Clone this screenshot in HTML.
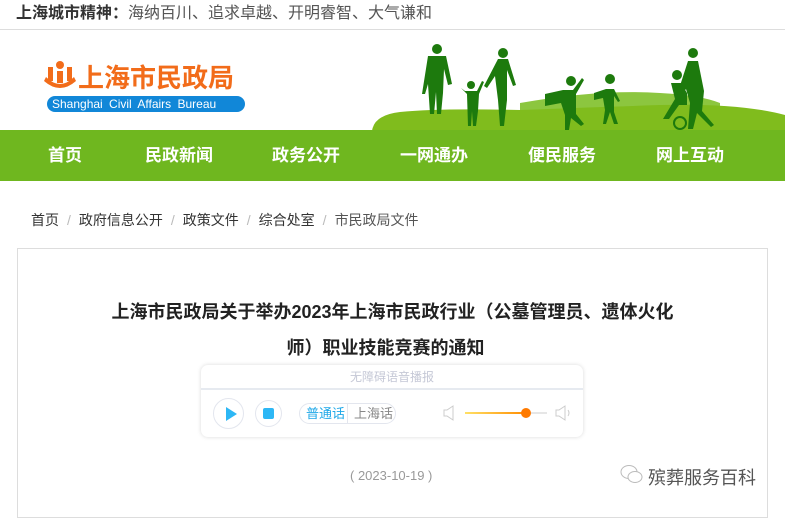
<!DOCTYPE html>
<html><head><meta charset="utf-8"><style>
*{margin:0;padding:0;box-sizing:border-box}
body{width:785px;height:508px;overflow:hidden;background:#fff;font-family:"Liberation Sans","Noto Sans CJK SC",sans-serif;position:relative}
.top{height:30px;border-bottom:1px solid #ddd;font-size:16px;line-height:28px;padding-left:16px;color:#333;font-weight:bold}
.top span{color:#555;font-weight:normal}
.hdr{position:absolute;top:31px;left:0;width:785px;height:100px}
.nav{position:absolute;top:130px;left:0;width:785px;height:51px;background:#6fb71f}
.nav a{position:absolute;top:0;line-height:51px;color:#fff;font-size:17px;font-weight:bold;text-decoration:none}
.bc{position:absolute;top:210px;left:31px;font-size:14px;color:#333}
.bc i{font-style:normal;color:#bbb;margin:0 8px}
.box{position:absolute;top:248px;left:17px;width:751px;height:270px;border:1px solid #ddd}
.t{position:absolute;left:0;width:785px;text-align:center;font-size:18px;font-weight:bold;color:#222}
.pl{position:absolute;left:201px;top:365px;width:382px;height:72px;border-radius:7px;box-shadow:0 0 4px rgba(0,0,0,.15);background:#fff}
</style></head><body>
<div class="top">上海城市精神：<span>海纳百川、追求卓越、开明睿智、大气谦和</span></div>
<div class="hdr">
<svg width="785" height="100" style="position:absolute;left:0;top:0">
<g fill="#f26c1a"><circle cx="60" cy="34" r="4"/><path d="M48 36h5v14h-5zM57 40h6v12h-6zM67 36h5v14h-5z"/><path d="M46 46q14 14 28 0l2 4q-16 14-32 0z"/></g>
<rect x="47" y="65" width="198" height="16" rx="8" fill="#1187d8"/>
<path d="M520 72 Q600 58 660 62 Q700 64 720 72 L720 85 L520 85Z" fill="#8cc63f"/>
<path d="M372 100 Q374 84 400 81 Q440 77 520 79 Q600 76 660 74 Q740 72 785 84 L785 100 Z" fill="#80bc1d"/>
<g fill="#1d7a0d">
<circle cx="437" cy="18" r="5"/><path d="M428 25h18l6 28-4 1-4-16-1 24-2 21h-4l-1-22-2 22h-4l-2-30-3 10h-3z"/>
<circle cx="471" cy="54" r="4"/><path d="M465 60h12l5-10 2 1-5 12 -1 17-2 15h-3l-1-15-1 15h-3l-1-32-6-6z"/>
<circle cx="503" cy="22" r="5"/><path d="M498 28h10l8 26-3 1-6-16 0 30-3 26h-4l-2-26-3-24-8 12-3-2z"/>
<circle cx="571" cy="50" r="5"/><path d="M545 63l18-4 10 0 9-12 2 2-8 14v20l8 10-3 2-10-8-2 12-4 1 0-16-4-12-16 3z"/>
<circle cx="610" cy="48" r="5"/><path d="M594 62l12-4 8 0 6 12-2 1-4-6 0 16 4 12-4 0-4-12-4 12-3 0 2-14-2-12-9 2z"/>
<circle cx="677" cy="44" r="5"/><path d="M671 52h10l6 10 0 12-8 0-10 14h-6l12-20z"/>
<circle cx="693" cy="22" r="5"/><path d="M688 30h10l6 30-2 20 12 14-3 2-14-14-4 16h-5l2-26-4-14-6 8-3-2z"/>
</g>
<circle cx="680" cy="92" r="6" fill="none" stroke="#1d7a0d" stroke-width="2"/>
</svg>
<div style="position:absolute;left:78px;top:27px;font-size:26px;font-weight:bold;color:#f26c1a;letter-spacing:0">上海市民政局</div>
<div style="position:absolute;left:52px;top:65px;font-size:12px;line-height:16px;color:#fff;word-spacing:3px">Shanghai Civil Affairs Bureau</div>
</div>
<div class="nav"><a style="left:48px">首页</a><a style="left:145px">民政新闻</a><a style="left:272px">政务公开</a><a style="left:400px">一网通办</a><a style="left:528px">便民服务</a><a style="left:656px">网上互动</a></div>
<div class="bc">首页<i>/</i>政府信息公开<i>/</i>政策文件<i>/</i>综合处室<i>/</i><span style="color:#555">市民政局文件</span></div>
<div class="box"></div>
<div class="t" style="top:298px">上海市民政局关于举办2023年上海市民政行业（公墓管理员、遗体火化</div>
<div class="t" style="top:334px;left:-7px">师）职业技能竞赛的通知</div>
<div class="pl">
<div style="height:25px;border-bottom:2px solid #e6eaf0;text-align:center;font-size:12px;line-height:25px;color:#c5c8d6">无障碍语音播报</div>
<div style="position:absolute;left:12px;top:33px;width:31px;height:31px;border:1px solid #e3e6ee;border-radius:50%"><div style="position:absolute;left:12px;top:8px;border-left:11px solid #2db7f5;border-top:7px solid transparent;border-bottom:7px solid transparent"></div></div>
<div style="position:absolute;left:54px;top:35px;width:27px;height:27px;border:1px solid #e3e6ee;border-radius:50%"><div style="position:absolute;left:7px;top:7px;width:11px;height:11px;background:#2db7f5;border-radius:2px"></div></div>
<div style="position:absolute;left:98px;top:38px;width:97px;height:21px;border:1px solid #e3e6ee;border-radius:11px;font-size:13px;line-height:19px"><span style="position:absolute;left:6px;color:#1fa8e8">普通话</span><span style="position:absolute;left:47px;top:0;height:19px;border-left:1px solid #e3e6ee;padding-left:6px;color:#888">上海话</span></div>
<svg style="position:absolute;left:242px;top:40px" width="12" height="16"><path d="M1 5h3l6-4v14l-6-4H1z" fill="none" stroke="#ccc"/></svg>
<div style="position:absolute;left:264px;top:47px;width:62px;height:2px;background:linear-gradient(90deg,#ffe066,#ff8c00)"></div>
<div style="position:absolute;left:326px;top:47px;width:20px;height:2px;background:#e6e6e6"></div>
<div style="position:absolute;left:320px;top:43px;width:10px;height:10px;border-radius:50%;background:#ff7a00"></div>
<svg style="position:absolute;left:354px;top:40px" width="18" height="16"><path d="M1 5h3l6-4v14l-6-4H1z" fill="none" stroke="#ccc"/><path d="M13 5q2 3 0 6" fill="none" stroke="#ccc"/></svg>
</div>
<div style="position:absolute;left:350px;top:468px;font-size:13px;color:#999">( 2023-10-19 )</div>
<svg style="position:absolute;left:620px;top:464px" width="24" height="20"><ellipse cx="9" cy="8" rx="8" ry="6.5" fill="none" stroke="#bbb"/><ellipse cx="15" cy="13" rx="7" ry="5.5" fill="#fff" stroke="#bbb"/></svg>
<div style="position:absolute;left:648px;top:464px;font-size:18px;color:#555">殡葬服务百科</div>
</body></html>
